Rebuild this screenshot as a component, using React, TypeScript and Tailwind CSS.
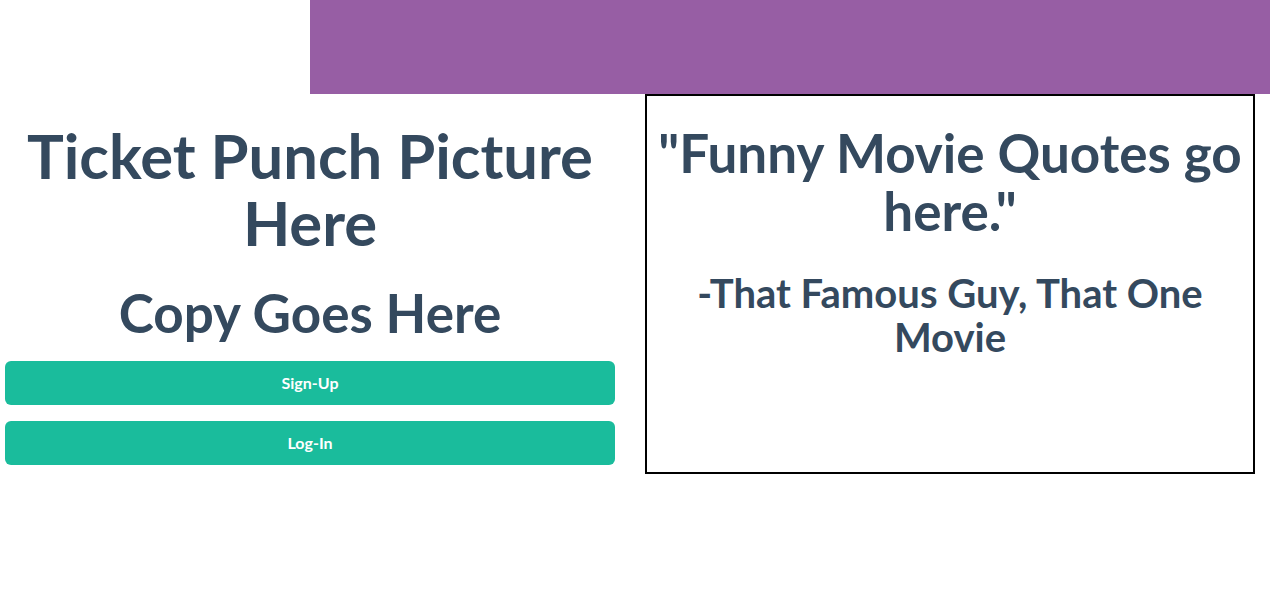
export default function App() {
  return (
    <div className="min-h-screen bg-white text-[#34495e]" style={{ fontFamily: "Lato, 'Open Sans', sans-serif" }}>
      {/* top banner */}
      <div className="ml-[310px] h-[94px] bg-[#975ea4]" />

      <div className="flex items-start">
        {/* left column */}
        <div className="w-[620px] px-[5px] text-center">
          <h1 className="mt-[28px] text-[61.5px] font-bold leading-[67px]">
            Ticket Punch Picture Here
          </h1>
          <h2 className="mt-[28px] text-[53px] font-bold leading-[58px]">
            Copy Goes Here
          </h2>
          <div className="mt-[19px] flex flex-col gap-4">
            <button className="h-[44px] w-[610px] rounded-md bg-[#1abc9c] text-[16px] font-bold text-white">
              Sign-Up
            </button>
            <button className="h-[44px] w-[610px] rounded-md bg-[#1abc9c] text-[16px] font-bold text-white">
              Log-In
            </button>
          </div>
        </div>

        {/* quote box */}
        <div className="ml-[25px] h-[380px] w-[610px] border-2 border-black px-2 text-center">
          <p className="mt-[28px] text-[53px] font-bold leading-[58px]">
            "Funny Movie Quotes go here."
          </p>
          <p className="mt-[31px] text-[40px] font-bold leading-[44px]">
            -That Famous Guy, That One Movie
          </p>
        </div>
      </div>
    </div>
  );
}
